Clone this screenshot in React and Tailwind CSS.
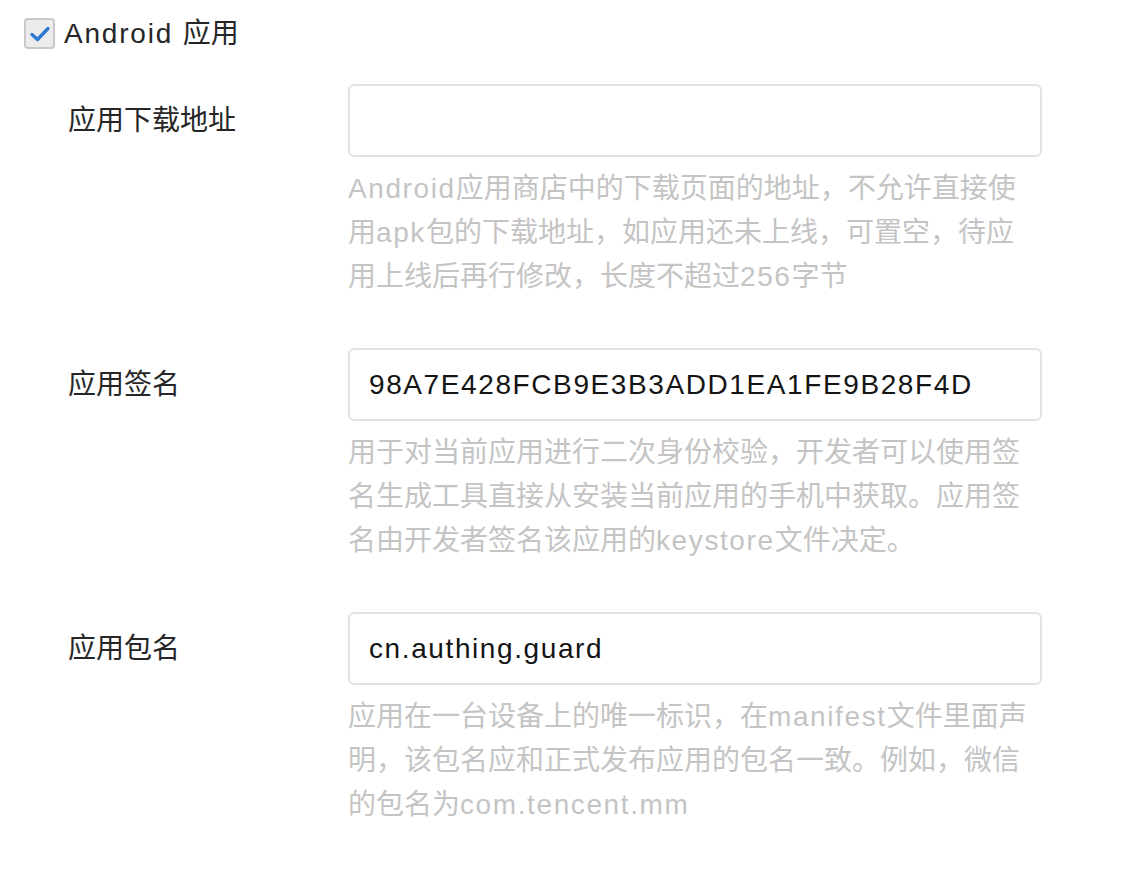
import React from 'react';

const font = { fontFamily: '"Liberation Sans", "Noto Sans CJK SC", sans-serif' };

const rows = [
    {
        label: '应用下载地址',
        value: '',
        help: [
            'Android应用商店中的下载页面的地址，不允许直接使',
            '用apk包的下载地址，如应用还未上线，可置空，待应',
            '用上线后再行修改，长度不超过256字节',
        ],
    },
    {
        label: '应用签名',
        value: '98A7E428FCB9E3B3ADD1EA1FE9B28F4D',
        help: [
            '用于对当前应用进行二次身份校验，开发者可以使用签',
            '名生成工具直接从安装当前应用的手机中获取。应用签',
            '名由开发者签名该应用的keystore文件决定。',
        ],
    },
    {
        label: '应用包名',
        value: 'cn.authing.guard',
        help: [
            '应用在一台设备上的唯一标识，在manifest文件里面声',
            '明，该包名应和正式发布应用的包名一致。例如，微信',
            '的包名为com.tencent.mm',
        ],
    },
];

// latin runs are a bit wider in the original font, widen them
const Mixed = ({ text }) =>
    text.split(/([A-Za-z0-9. ]+)/).map((part, i) =>
        i % 2 ? (
            <span key={i} className="tracking-[1.6px]">{part}</span>
        ) : (
            part
        )
    );

const FormRow = ({ label, value, help }) => (
    <div className="flex">
        {/* label */}
        <div className="w-[280px] h-[73px] flex items-center text-[28px] text-[#262626]">
            {label}
        </div>
        {/* input + help */}
        <div className="w-[694px]">
            <div className="h-[73px] rounded-[6px] border-2 border-[#e3e3e3] bg-white flex items-center px-[19px] text-[28px] text-[#141414] tracking-[1.6px]">
                {value}
            </div>
            <div className="mt-[10px] text-[28px] leading-[44px] text-[#c4c4c4] whitespace-nowrap">
                {help.map((line) => (
                    <div key={line}>
                        <Mixed text={line} />
                    </div>
                ))}
            </div>
        </div>
    </div>
);

export default function App() {
    return (
        <div className="min-h-screen bg-white pt-[18px] pl-[24px]" style={font}>
            {/* Android checkbox */}
            <div className="h-[31px] flex items-center gap-[9px]">
                <div className="w-[31px] h-[31px] rounded-[4px] border-2 border-[#c9c9c9] bg-[#ececec] flex items-center justify-center">
                    <svg width="22" height="18" viewBox="0 0 22 18" fill="none">
                        <path d="M3 9.5 L8.5 14.5 L19 3.5" stroke="#2f78d2" strokeWidth="3.4" strokeLinecap="round" strokeLinejoin="round" />
                    </svg>
                </div>
                <span className="text-[28px] leading-none text-[#262626]">
                    <span className="tracking-[1.8px]">Android </span>应用
                </span>
            </div>

            {/* Form */}
            <div className="pl-[44px] mt-[35px] flex flex-col gap-[49px]">
                {rows.map((r) => (
                    <FormRow key={r.label} {...r} />
                ))}
            </div>
        </div>
    );
}
